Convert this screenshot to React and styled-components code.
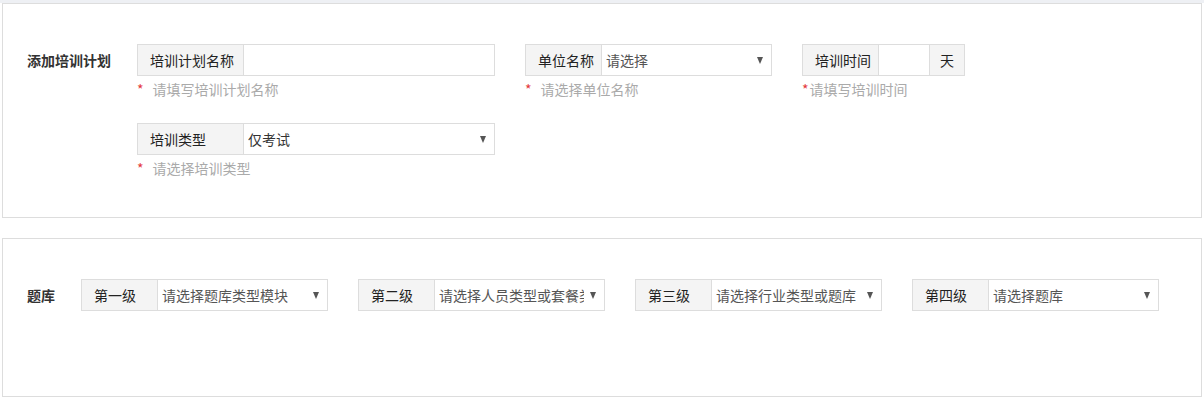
import styled, { createGlobalStyle } from "styled-components";

const GlobalStyle = createGlobalStyle`
  html, body {
    margin: 0;
    padding: 0;
    background: #fff;
  }
  body {
    font-family: "Noto Sans CJK SC", "Noto Sans", sans-serif;
    font-size: 14px;
    color: #333;
  }
  * {
    box-sizing: border-box;
  }
`;

const levels = [
  { label: "第一级", value: "请选择题库类型模块" },
  { label: "第二级", value: "请选择人员类型或套餐类型" },
  { label: "第三级", value: "请选择行业类型或题库" },
  { label: "第四级", value: "请选择题库" },
];

export default function App() {
  return (
    <>
      <GlobalStyle />
      <TopStrip />
      <Page>
        <Panel>
          <Section>
            <SectionLabel width={110}>添加培训计划</SectionLabel>
            <Rows>
              <FieldRow>
                <Field width={358} hint="请填写培训计划名称">
                  <Addon width={106}>培训计划名称</Addon>
                  <TextInput />
                </Field>
                <Field width={247} hint="请选择单位名称">
                  <Addon>单位名称</Addon>
                  <Select value="请选择" />
                </Field>
                <Field width={163} hint="请填写培训时间" tight>
                  <Addon>培训时间</Addon>
                  <TextInput />
                  <Unit>天</Unit>
                </Field>
              </FieldRow>
              <FieldRow>
                <Field width={358} hint="请选择培训类型">
                  <Addon width={106}>培训类型</Addon>
                  <Select value="仅考试" dark />
                </Field>
              </FieldRow>
            </Rows>
          </Section>
        </Panel>

        <Panel bottom={85}>
          <Section>
            <SectionLabel width={54}>题库</SectionLabel>
            <FieldRow>
              {levels.map((level) => (
                <Field key={level.label} width={247}>
                  <Addon>{level.label}</Addon>
                  <Select value={level.value} />
                </Field>
              ))}
            </FieldRow>
          </Section>
        </Panel>
      </Page>
    </>
  );
}

function Field({ width, hint, tight, children }) {
  return (
    <FieldWrapper width={width}>
      <Group>{children}</Group>
      {hint && (
        <Hint>
          <Star tight={tight}>*</Star>
          {hint}
        </Hint>
      )}
    </FieldWrapper>
  );
}

function Select({ value, dark }) {
  return (
    <SelectBox>
      <SelectValue dark={dark}>{value}</SelectValue>
      <Arrow />
    </SelectBox>
  );
}

const TopStrip = styled.div`
  height: 3px;
  background: #eef0f4;
`;

const Page = styled.div`
  padding: 0 2px 2px;
  display: flex;
  flex-direction: column;
  gap: 20px;
`;

const Panel = styled.div`
  border: 1px solid #dddddd;
  background: #fff;
  padding: 40px 24px ${({ bottom }) => bottom ?? 39}px;
`;

const Section = styled.div`
  display: flex;
  align-items: flex-start;
`;

const SectionLabel = styled.div`
  width: ${({ width }) => width}px;
  flex-shrink: 0;
  font-weight: bold;
  line-height: 32px;
  color: #333;
`;

const Rows = styled.div`
  display: flex;
  flex-direction: column;
  gap: 24px;
`;

const FieldRow = styled.div`
  display: flex;
  gap: 30px;
`;

const FieldWrapper = styled.div`
  width: ${({ width }) => width}px;
  display: flex;
  flex-direction: column;
`;

const Group = styled.div`
  display: flex;
  height: 32px;
  border: 1px solid #dddddd;
  background: #fff;
`;

const Addon = styled.div`
  width: ${({ width }) => width ?? 76}px;
  flex-shrink: 0;
  padding-left: 12px;
  background: #f4f4f4;
  border-right: 1px solid #dddddd;
  line-height: 30px;
  color: #222;
  white-space: nowrap;
`;

const Unit = styled.div`
  width: 35px;
  flex-shrink: 0;
  background: #f4f4f4;
  border-left: 1px solid #dddddd;
  line-height: 30px;
  text-align: center;
  color: #222;
`;

const TextInput = styled.input`
  flex: 1;
  min-width: 0;
  border: none;
  outline: none;
  padding: 0 4px;
  font: inherit;
  background: #fff;
`;

const SelectBox = styled.div`
  flex: 1;
  min-width: 0;
  display: flex;
  align-items: center;
  padding: 0 8px 0 4px;
  gap: 6px;
`;

const SelectValue = styled.span`
  flex: 1;
  min-width: 0;
  overflow: hidden;
  white-space: nowrap;
  line-height: 30px;
  color: ${({ dark }) => (dark ? "#333" : "#555")};
`;

const Arrow = styled.span`
  width: 0;
  height: 0;
  flex-shrink: 0;
  border-left: 3.5px solid transparent;
  border-right: 3.5px solid transparent;
  border-top: 7px solid #555;
  margin-top: 1px;
`;

const Hint = styled.div`
  margin-top: 3px;
  line-height: 20px;
  color: #aaa;
  white-space: nowrap;
`;

const Star = styled.span`
  color: #e4393c;
  margin-right: ${({ tight }) => (tight ? 1 : 9)}px;
`;
